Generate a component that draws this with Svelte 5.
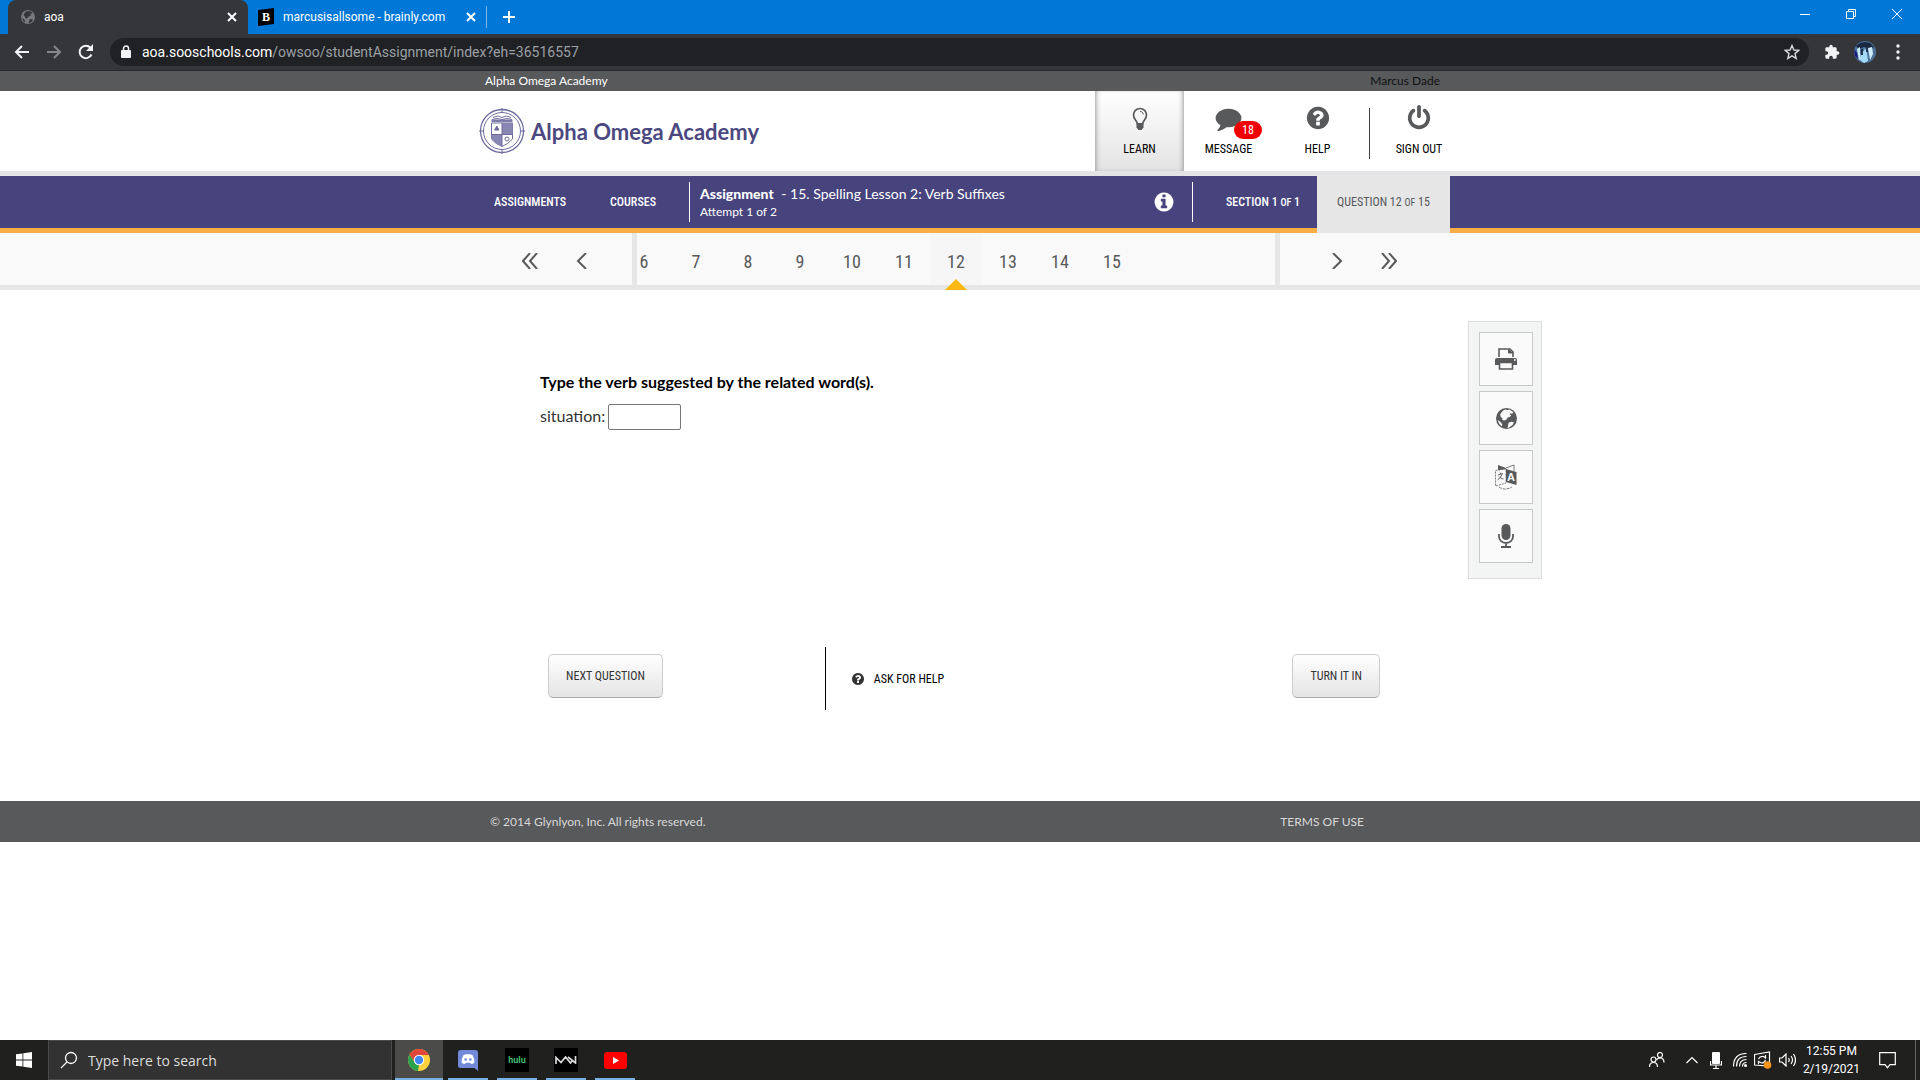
<script>
  const circle = 'M1664 896q0 209-103 385.5t-279.5 279.5-385.5 103-385.5-103-279.5-279.5-103-385.5 103-385.5 279.5-279.5 385.5-103 385.5 103 279.5 279.5 103 385.5z';
  const questionMark = 'M1024 1376v-192q0-14-9-23t-23-9h-192q-14 0-23 9t-9 23v192q0 14 9 23t23 9h192q14 0 23-9t9-23zm256-672q0-88-55.5-163t-138.5-116-170-41q-243 0-371 213-15 24 8 42l132 100q7 6 19 6 16 0 25-12 53-68 86-92 34-24 86-24 48 0 85.5 26t37.5 59q0 38-20 61t-68 45q-63 28-115.5 86.5t-52.5 125.5v36q0 14 9 23t23 9h192q14 0 23-9t9-23q0-19 21.5-49.5t54.5-49.5q32-18 49-28.5t46-35 44.5-48 28-60.5 12.5-81z';
  const infoMark = 'M1152 1376v-160q0-14-9-23t-23-9h-96v-512q0-14-9-23t-23-9h-320q-14 0-23 9t-9 23v160q0 14 9 23t23 9h96v320h-96q-14 0-23 9t-9 23v160q0 14 9 23t23 9h448q14 0 23-9t9-23zm-128-896v-160q0-14-9-23t-23-9h-192q-14 0-23 9t-9 23v160q0 14 9 23t23 9h192q14 0 23-9t9-23z';
  const comment = 'M1792 896q0 174-120 321.5t-326 233-450 85.5q-70 0-145-8-198 175-460 242-49 14-114 22h-5q-15 0-27-10.5t-16-27.5v-1q-3-4-.5-12t2-10 4.5-9.5l6-9 7-8.5 8-9q7-8 31-34.5t34.5-38 31-39.5 32.5-51 27-59 26-76q-157-89-247.5-220t-90.5-281q0-174 120-321.5t326-233 450-85.5 450 85.5 326 233 120 321.5z';
  const power = 'M1664 896q0 156-61 298t-164 245-245 164-298 61-298-61-245-164-164-245-61-298q0-182 80.5-343t226.5-270q43-32 95.5-25t83.5 50q32 42 24.5 94.5t-49.5 84.5q-98 74-151.5 181t-53.5 228q0 104 40.5 198.5t109.5 163.5 163.5 109.5 198.5 40.5 198.5-40.5 163.5-109.5 109.5-163.5 40.5-198.5q0-121-53.5-228t-151.5-181q-42-32-49.5-84.5t24.5-94.5q31-43 84-50t95 25q146 109 226.5 270t80.5 343zm-640-768v640q0 52-38 90t-90 38-90-38-38-90v-640q0-52 38-90t90-38 90 38 38 90z';

  const numbers = [6, 7, 8, 9, 10, 11, 12, 13, 14, 15];
  let current = $state(12);
  let answer = $state('');
</script>

{#snippet globe(size)}
  <svg width={size} height={size} viewBox="0 0 20 20">
    <circle cx="10" cy="10" r="10" fill="currentColor" />
    <path class="land" d="M6.500 2.500 9 1.500l2 .5 2-.5 3.500 2.500-1 1.500-1.500-.5-1 1 1.500 1-1.500 1.500-2 .5-1 2-2 1-2-.5 0-2-1.500-1-.5-2.500z" />
    <path class="land" d="m12 14 2.500-1 2.500.5-1 2.500-3.500 2.500-1.500.5z" />
    <path class="land" d="M1.500 11.500 4 13l2 2.500-.5 2-2.500-2.500z" />
  </svg>
{/snippet}

<div class="screen">
  <div class="tabs">
    <div class="tab active">
      <span class="tab-globe">{@render globe(14)}</span>
      <span class="tab-title">aoa</span>
      <button class="tab-close" aria-label="Close tab">
        <svg width="10" height="10" viewBox="0 0 10 10"><path d="M1 1l8 8M9 1l-8 8" stroke="currentColor" stroke-width="2" /></svg>
      </button>
    </div>
    <div class="tab">
      <svg class="brainly" width="16" height="18" viewBox="0 0 16 18">
        <path d="M0 2 16 0v16L0 18z" fill="#000" />
        <text x="4" y="13" font-size="12" font-weight="900" fill="#fff">B</text>
      </svg>
      <span class="tab-title">marcusisallsome - brainly.com</span>
      <button class="tab-close" aria-label="Close tab">
        <svg width="10" height="10" viewBox="0 0 10 10"><path d="M1 1l8 8M9 1l-8 8" stroke="currentColor" stroke-width="2" /></svg>
      </button>
    </div>
    <button class="new-tab" aria-label="New tab">
      <svg width="12" height="12" viewBox="0 0 12 12"><path d="M6 0v12M0 6h12" stroke="currentColor" stroke-width="2" /></svg>
    </button>
    <div class="window-buttons">
      <button aria-label="Minimize"><svg width="10" height="10" viewBox="0 0 10 10"><path d="M0 5.5h10" /></svg></button>
      <button aria-label="Restore"><svg width="10" height="10" viewBox="0 0 10 10"><path d="M.5 2.5h7v7h-7zM2.500 2.500v-2h7v7h-2" /></svg></button>
      <button aria-label="Close"><svg width="10" height="10" viewBox="0 0 10 10"><path d="m0 0 10 10M10 0 0 10" /></svg></button>
    </div>
  </div>

  <div class="toolbar">
    <button aria-label="Back"><svg width="16" height="16" viewBox="0 0 16 16"><path d="M15 8H2M8 2 2 8l6 6" fill="none" stroke="currentColor" stroke-width="2" /></svg></button>
    <button class="dim" aria-label="Forward"><svg width="16" height="16" viewBox="0 0 16 16"><path d="M1 8h13M8 2l6 6-6 6" fill="none" stroke="currentColor" stroke-width="2" /></svg></button>
    <button aria-label="Reload"><svg width="16" height="16" viewBox="0 0 16 16"><path d="M13.500 10.500A6.200 6.200 0 1 1 12.500 3.800" fill="none" stroke="currentColor" stroke-width="2" /><path d="M15 0v7H8z" fill="currentColor" /></svg></button>
    <div class="omnibox">
      <svg width="10" height="14" viewBox="0 0 10 14"><rect y="5" width="10" height="8" rx="1" fill="currentColor" /><path d="M2.500 6V3.500a2.500 2.500 0 0 1 5 0V6" fill="none" stroke="currentColor" stroke-width="1.500" /></svg>
      <span class="url"><b>aoa.sooschools.com</b>/owsoo/studentAssignment/index?eh=36516557</span>
      <svg class="star" width="16" height="16" viewBox="0 0 16 16"><path d="m8 1.500 1.900 4.500 4.800.4-3.700 3.200 1.200 4.800L8 11.800l-4.200 2.600L5 9.600 1.300 6.400l4.800-.4z" fill="none" stroke="currentColor" stroke-width="1.400" /></svg>
    </div>
    <svg class="puzzle" width="16" height="16" viewBox="0 0 24 24"><path fill="currentColor" d="M20.500 11H19V7c0-1.100-.9-2-2-2h-4V3.500C13 2.120 11.880 1 10.500 1S8 2.120 8 3.500V5H4c-1.100 0-1.990.9-1.990 2v3.800H3.500c1.490 0 2.700 1.210 2.700 2.700s-1.210 2.700-2.700 2.700H2V20c0 1.100.9 2 2 2h3.800v-1.500c0-1.490 1.210-2.700 2.700-2.700s2.700 1.210 2.700 2.700V22H17c1.100 0 2-.9 2-2v-4h1.500c1.380 0 2.500-1.120 2.500-2.500S21.880 11 20.500 11z" /></svg>
    <svg class="avatar" width="22" height="22" viewBox="0 0 22 22">
      <circle cx="11" cy="11" r="11" fill="#4a7098" />
      <path d="M2 5 6 2l5-1 5 1 4 4-4 2-6-2-5 2z" fill="#1b2740" />
      <path d="M3 8l3-2v6l1 6-2 1zM14 7l4-1 1 7-3 6z" fill="#cfeefd" />
      <path d="M8 10h2l1-3 2 5 1 8-4 2-4-3z" fill="#a5dbf8" />
      <path d="M7 8h2v6H7zM12 6h2v5h-2z" fill="#22344f" />
      <path d="M0 8l3 4 1 6-3-3z" fill="#181a80" />
    </svg>
    <svg class="dots" width="4" height="16" viewBox="0 0 4 16"><circle cx="2" cy="2" r="1.700" /><circle cx="2" cy="8" r="1.700" /><circle cx="2" cy="14" r="1.700" /></svg>
  </div>

  <div class="page">
    <div class="school-bar">
      <div class="wrap">
        <span>Alpha Omega Academy</span>
        <span class="student">Marcus Dade</span>
      </div>
    </div>

    <header>
      <div class="wrap">
        <a class="logo" href="#home">
          <svg width="46" height="46" viewBox="0 0 46 46" fill="none" stroke="#6f6d9f">
            <circle cx="23" cy="23" r="21.500" stroke-width="1.300" />
            <circle cx="23" cy="23" r="18.500" />
            <path d="M23 0v5M23 41v5M0 23h5M41 23h5" />
            <path d="M13 11.500q5-2 10 0 5-2 10 0M14 9.500q5-3 9 0 4-3 9 0" />
            <path d="M12.500 15v16q4 5 10.500 7.500 6.500-2.500 10.500-7.500V15z" fill="#fff" />
            <path d="M12.500 11.500h21V14h-21z" fill="#7d7baa" stroke="none" />
            <path d="M23 15h10.500v11.500H23zM12.500 26.500H23v12q-7-3-10.500-7.500z" fill="#8886b3" stroke="none" />
            <path d="M23 15v23M12.500 26.500h21" />
            <path d="m17.800 18 2.200 4h-4.400z" fill="#6f6d9f" />
            <circle cx="28" cy="31" r="2" />
          </svg>
          <span>Alpha Omega Academy</span>
        </a>
        <nav class="main-nav">
          <a class="nav-item current" href="#learn">
            <svg width="24" height="24" viewBox="0 0 24 24">
              <path d="M9.500 17c0-3-4-4.500-4-9a6.500 6.500 0 0 1 13 0c0 4.500-4 6-4 9z" fill="none" stroke="currentColor" stroke-width="1.700" />
              <path d="M12 4.500c2 0 3.200 1 3.200 3" fill="none" stroke="currentColor" />
              <path d="M8.500 16h7v4.500L13.500 23h-3l-2-2.500z" fill="currentColor" />
            </svg>
            LEARN
          </a>
          <a class="nav-item" href="#message">
            <svg width="27" height="24" viewBox="0 130 1792 1664"><path d={comment} fill="currentColor" /></svg>
            MESSAGE
            <span class="badge">18</span>
          </a>
          <a class="nav-item" href="#help">
            <svg width="26" height="26" viewBox="0 0 1792 1792"><path d={circle + questionMark} fill="currentColor" fill-rule="evenodd" /></svg>
            HELP
          </a>
          <a class="nav-item sign-out" href="#signout">
            <svg width="26" height="26" viewBox="0 0 1792 1792"><path d={power} fill="currentColor" /></svg>
            SIGN OUT
          </a>
        </nav>
      </div>
    </header>

    <div class="course-bar">
      <div class="wrap">
        <a class="course-link" href="#assignments">ASSIGNMENTS</a>
        <a class="course-link" href="#courses">COURSES</a>
        <div class="assignment">
          <div>
            <p class="title"><strong>Assignment</strong> - 15. Spelling Lesson 2: Verb Suffixes</p>
            <p class="attempt">Attempt 1 of 2</p>
          </div>
          <button class="info" aria-label="Assignment info">
            <svg width="22" height="22" viewBox="0 0 1792 1792"><path d={circle + infoMark} fill="currentColor" fill-rule="evenodd" /></svg>
          </button>
        </div>
        <div class="section">SECTION 1&nbsp;<small>OF</small>&nbsp;1</div>
        <div class="question-count">QUESTION 12&nbsp;<small>OF</small>&nbsp;15</div>
      </div>
    </div>

    <div class="pager">
      <div class="wrap">
        <div class="jump left">
          <button aria-label="First question"><svg width="16" height="16" viewBox="0 0 16 16"><path d="M8 0 1 8l7 8M15 0 8 8l7 8" /></svg></button>
          <button aria-label="Previous question"><svg width="16" height="16" viewBox="0 0 16 16"><path d="M12 0 4 8l8 8" /></svg></button>
        </div>
        <div class="numbers">
          <div class="track">
            {#each numbers as n}
              <button class:selected={n === current} onclick={() => (current = n)}>{n}</button>
            {/each}
          </div>
        </div>
        <div class="jump right">
          <button aria-label="Next question"><svg width="16" height="16" viewBox="0 0 16 16"><path d="m4 0 8 8-8 8" /></svg></button>
          <button aria-label="Last question"><svg width="16" height="16" viewBox="0 0 16 16"><path d="m1 0 7 8-7 8M8 0l7 8-7 8" /></svg></button>
        </div>
      </div>
    </div>

    <main>
      <div class="content">
        <div class="question">
          <p class="instruction">Type the verb suggested by the related word(s).</p>
          <div class="answer">
            <label for="answer">situation:</label>
            <input id="answer" type="text" bind:value={answer} />
          </div>
        </div>
        <div class="actions">
          <button class="push">NEXT QUESTION</button>
          <a class="ask" href="#ask">
            <svg width="12" height="12" viewBox="128 128 1536 1536"><path d={circle + questionMark} fill="#333" fill-rule="evenodd" /></svg>
            ASK FOR HELP
          </a>
          <button class="push last">TURN IT IN</button>
        </div>
      </div>
      <aside class="tools">
        <button aria-label="Print">
          <svg width="24" height="22" viewBox="0 0 24 22">
            <path d="M5 9V1h11l3 3v5" fill="none" stroke="currentColor" stroke-width="1.600" />
            <path d="M14.500 1v4H19" fill="currentColor" stroke="currentColor" />
            <path d="M1 17v-5q0-2 2-2h18q2 0 2 2v5z" fill="currentColor" />
            <path d="M5.500 14.500h13V21h-13z" fill="#fafafa" stroke="currentColor" stroke-width="1.600" />
            <circle cx="20.800" cy="12" r=".9" fill="#fafafa" />
          </svg>
        </button>
        <button aria-label="Web">{@render globe(21)}</button>
        <button aria-label="Translate">
          <svg width="22" height="26" viewBox="0 0 22 26">
            <path d="M3 1l8 3v2L3 7z" fill="currentColor" />
            <path d="M11 4l8-3v6" fill="none" stroke="currentColor" stroke-width=".8" />
            <path d="M.5 6.500 11 5v14L.5 22z" fill="#fafafa" stroke="currentColor" stroke-width=".8" stroke-dasharray="2 1" />
            <path d="M11 5l10.500 3v13L11 18z" fill="currentColor" />
            <path d="M3 11l5-1.500M5 8.500l1 2M7 10c-1 3-2.500 4.500-4.500 6M4 12.500c1 1.500 2.500 2 4.500 2.500" fill="none" stroke="currentColor" stroke-width=".9" />
            <text x="12" y="17" font-size="11" font-weight="700" fill="#fafafa">A</text>
            <path d="M4 23q6 4 13 0" fill="none" stroke="currentColor" stroke-width=".8" stroke-dasharray="3 1" />
          </svg>
        </button>
        <button aria-label="Record">
          <svg width="16" height="24" viewBox="0 0 16 24">
            <rect x="3.500" y="0" width="9" height="16" rx="4.500" fill="currentColor" />
            <path d="M1 10v2.500a7 6.500 0 0 0 14 0V10M8 19v4M3 23h10" fill="none" stroke="currentColor" stroke-width="1.800" />
          </svg>
        </button>
      </aside>
    </main>

    <footer>
      <div class="wrap">
        <span>© 2014 Glynlyon, Inc. All rights reserved.</span>
        <a href="#terms">TERMS OF USE</a>
      </div>
    </footer>
  </div>

  <div class="taskbar">
    <button class="start" aria-label="Start">
      <svg width="16" height="16" viewBox="0 0 16 16" fill="#fff"><path d="M0 2.300 6.500 1.400v6.200H0zM7.300 1.200 16 0v7.600H7.300zM0 8.400h6.500v6.200L0 13.700zM7.300 8.400H16V16l-8.700-1.200z" /></svg>
    </button>
    <label class="search">
      <svg width="18" height="18" viewBox="0 0 18 18" fill="none" stroke="#fff" stroke-width="1.300"><circle cx="11" cy="7" r="5.500" /><path d="M7 11 1 17" /></svg>
      <input type="text" placeholder="Type here to search" />
    </label>
    <div class="apps">
      <button class="app chrome" aria-label="Chrome">
        <svg width="22" height="22" viewBox="0 0 22 22">
          <circle cx="11" cy="11" r="11" fill="#fdd23e" />
          <path d="M1.500 5.500A11 11 0 0 1 20.500 5.500L20.800 6H11L6.700 13.500z" fill="#e2453b" />
          <path d="M1.500 5.500 6.700 13.500 11 16l-1 6A11 11 0 0 1 1.500 5.500z" fill="#2ba24c" />
          <circle cx="11" cy="11" r="5.200" fill="#fff" /><circle cx="11" cy="11" r="4.200" fill="#4286f4" />
        </svg>
      </button>
      <button class="app" aria-label="Discord">
        <svg width="20" height="21" viewBox="0 0 20 21">
          <path d="M2.500 0h15Q20 0 20 2.500V21l-3.500-3h-14Q0 18 0 15.500v-13Q0 0 2.500 0z" fill="#7289da" />
          <path d="M5.500 5 8 4.300h4l2.500.7q2 3.500 2 7.500-1.500 1.500-3.500 1.500l-.8-1.200H7.800L7 14q-2 0-3.500-1.500 0-4 2-7.500z" fill="#fff" />
          <circle cx="7.700" cy="9.500" r="1.300" fill="#7289da" /><circle cx="12.300" cy="9.500" r="1.300" fill="#7289da" />
        </svg>
      </button>
      <button class="app" aria-label="Hulu"><span class="tile hulu">hulu</span></button>
      <button class="app" aria-label="Modern Warfare">
        <span class="tile">
          <svg width="22" height="8" viewBox="0 0 22 8" fill="none" stroke="#d8d8d8" stroke-width="1.700"><path d="M1 8V1.500l5 5 4.500-5.500 5 6 2-2.500M13 1l7.500 6V0" /></svg>
        </span>
      </button>
      <button class="app" aria-label="YouTube">
        <svg width="23" height="17" viewBox="0 0 23 17"><rect width="23" height="17" rx="3" fill="#f00" /><path d="M9 5v7l6-3.500z" fill="#fff" /></svg>
      </button>
    </div>
    <div class="tray">
      <svg width="16" height="16" viewBox="0 0 16 16"><circle cx="4.500" cy="7.500" r="2.500" /><path d="M.5 15q0-4.500 4-4.500t4 4.500" /><circle cx="11" cy="3" r="2.500" /><path d="M7.500 8q1-2 3.500-2 4 0 4 4.500" /></svg>
      <svg class="chevron" width="12" height="8" viewBox="0 0 12 8"><path d="m.5 7 5.500-5.500L11.500 7" /></svg>
      <svg class="mic" width="12" height="17" viewBox="0 0 12 17"><rect x="2" y="0" width="8" height="12" rx="1" fill="#fff" stroke="none" /><path d="M.5 9v4h11V9M6 13v3M3 16.500h6" /></svg>
      <svg width="14" height="14" viewBox="0 0 14 14"><path d="M.5 13.500q0-13 13-13M3.500 13.500q0-10 10-10M6.500 13.500q0-7 7-7M9.500 13.500q0-4 4-4" /><circle cx="12.500" cy="12.500" r="1.500" fill="#fff" stroke="none" /></svg>
      <svg width="18" height="18" viewBox="0 0 18 18"><path d="M.5 3.500 15.500 1v14L.5 14z" /><path d="M4.500 8q1.500-3 5-2.500l2 1.500V4M11.500 9q-1 3-4 3l-3-1.500V13" /><circle cx="13.500" cy="14" r="3.800" fill="#f7941d" stroke="none" /></svg>
      <svg width="17" height="14" viewBox="0 0 17 14"><path d="M.5 5v4h2.500l4 4V1L3 5zM9.500 5q1.500 2 0 4M12 3q3 4 0 8M14.500 1q4 6 0 12" /></svg>
      <div class="clock"><span>12:55 PM</span><span>2/19/2021</span></div>
      <svg class="notes" width="17" height="17" viewBox="0 0 17 17"><path d="M.7.7h15.600v12H11l-2.500 3-2.500-3H.7z" /></svg>
    </div>
  </div>
</div>

<style>
  :global(body) {
    margin: 0;
    background: #fff;
  }

  .screen {
    min-height: 100vh;
    display: flex;
    flex-direction: column;
    font-family: Roboto, "Open Sans", sans-serif;
  }

  button {
    display: flex;
    align-items: center;
    justify-content: center;
    padding: 0;
    border: 0;
    background: none;
    color: inherit;
    font: inherit;
    cursor: pointer;
  }

  a {
    color: inherit;
    text-decoration: none;
  }

  p {
    margin: 0;
  }

  /* browser */
  .tabs {
    display: flex;
    align-items: center;
    height: 34px;
    padding-left: 8px;
    background: #0078d7;
    color: #fff;
    font-size: 12px;
  }

  .tab {
    display: flex;
    align-items: center;
    box-sizing: border-box;
    width: 238px;
    height: 34px;
    padding: 0 10px;
  }

  .tab.active {
    width: 240px;
    padding: 0 11px 0 13px;
    border-radius: 8px 8px 0 0;
    background: #35363a;
  }

  .tab-globe {
    display: flex;
    color: #77797c;
    --land: #35363a;
  }

  .land {
    fill: var(--land, #fafafa);
  }

  .tab-title {
    flex: 1;
    margin-left: 9px;
    white-space: nowrap;
  }

  .brainly {
    font-family: "Liberation Serif", serif;
  }

  .new-tab {
    height: 22px;
    padding-left: 16px;
    border-left: 1px solid #7db9ea;
  }

  .window-buttons {
    display: flex;
    align-self: stretch;
    margin-left: auto;
  }

  .window-buttons button {
    width: 46px;
    height: 28px;
  }

  .window-buttons path {
    fill: none;
    stroke: #fff;
  }

  .toolbar {
    display: flex;
    align-items: center;
    height: 36px;
    padding: 0 20px 0 14px;
    border-bottom: 1px solid #28292b;
    background: #35363a;
    color: #f1f3f4;
  }

  .toolbar button {
    margin-right: 16px;
  }

  .toolbar .dim {
    color: #85878a;
  }

  .omnibox {
    flex: 1;
    display: flex;
    align-items: center;
    height: 28px;
    padding: 0 9px 0 11px;
    border-radius: 14px;
    background: #202124;
  }

  .url {
    flex: 1;
    margin-left: 11px;
    color: #9aa0a6;
    font-size: 14px;
  }

  .url b {
    color: #fff;
    font-weight: 400;
  }

  .star {
    color: #d5d7da;
  }

  .puzzle {
    margin: 0 14px 0 15px;
  }

  .dots {
    margin-left: 20px;
    fill: #f1f3f4;
  }

  /* page */
  .page {
    flex: 1;
    color: #000;
    font-family: Lato, sans-serif;
  }

  .wrap {
    display: flex;
    width: 980px;
    max-width: 100%;
    margin: 0 auto;
  }

  .school-bar {
    background: #58595b;
    color: #fff;
    font-size: 12px;
    line-height: 20px;
  }

  .school-bar .wrap {
    box-sizing: border-box;
    justify-content: space-between;
    padding: 0 10px 0 15px;
  }

  .student {
    color: #111;
  }

  header {
    border-bottom: 5px solid #e4e4e7;
  }

  header .wrap {
    height: 80px;
    justify-content: space-between;
  }

  .logo {
    display: flex;
    align-items: center;
    gap: 6px;
    padding-left: 9px;
    color: #4b4880;
    font-size: 22px;
    font-weight: 700;
  }

  .main-nav,
  .course-link,
  .section,
  .question-count,
  .actions,
  .numbers {
    font-family: "Roboto Condensed", "Liberation Sans Narrow", sans-serif;
  }

  .main-nav {
    display: flex;
    font-size: 12px;
    line-height: 20px;
  }

  .nav-item {
    position: relative;
    display: flex;
    flex-direction: column;
    align-items: center;
    justify-content: flex-end;
    gap: 8px;
    width: 89px;
    padding-bottom: 12px;
    box-sizing: border-box;
  }

  .nav-item svg {
    color: #58595b;
  }

  .nav-item.current {
    background: linear-gradient(#fff, #e3e3e3);
    box-shadow: inset 4px 0 5px -3px #999, inset -4px 0 5px -3px #999;
  }

  .nav-item.sign-out {
    width: 88px;
    padding-left: 26px;
  }

  .sign-out::before {
    content: "";
    position: absolute;
    left: 7px;
    top: 17px;
    height: 51px;
    border-left: 1px solid #444;
  }

  .badge {
    position: absolute;
    left: 50px;
    top: 30px;
    width: 28px;
    border-radius: 9px;
    background: #f00000;
    color: #fff;
    line-height: 18px;
    text-align: center;
  }

  .course-bar {
    border-bottom: 5px solid #f8ae47;
    background: #46437d;
    color: #fff;
  }

  .course-bar .wrap {
    height: 52px;
    align-items: center;
    font-size: 12px;
  }

  .course-link,
  .section {
    font-weight: 500;
  }

  .course-link {
    width: 79px;
  }

  .course-link:first-child {
    width: 116px;
    padding-left: 24px;
  }

  .assignment {
    flex: 1;
    display: flex;
    align-items: center;
    justify-content: space-between;
    height: 40px;
    padding: 0 17px 0 10px;
    border: solid #fff;
    border-width: 0 1px;
  }

  .title {
    font-size: 14px;
    line-height: 20px;
  }

  .title strong {
    margin-right: 4px;
    font-weight: 900;
  }

  .attempt {
    font-size: 12px;
    line-height: 16px;
  }

  .section {
    width: 108px;
    padding-left: 16px;
    text-align: center;
    line-height: 52px;
  }

  .question-count {
    align-self: flex-start;
    width: 133px;
    height: 57px;
    background: #e6e6e6;
    color: #58595b;
    line-height: 52px;
    text-align: center;
  }

  small {
    font-size: 10px;
  }

  .pager {
    border-bottom: 5px solid #e6e6e6;
    background: #f9f9f9;
    color: #58595b;
  }

  .pager .wrap,
  .track {
    height: 52px;
  }

  .jump {
    display: flex;
  }

  .left {
    width: 128px;
    padding-left: 34px;
  }

  .right {
    width: 139px;
    padding-left: 31px;
  }

  .pager button {
    box-sizing: border-box;
    flex: none;
    width: 52px;
    height: 52px;
    padding-top: 4px;
  }

  .jump path {
    fill: none;
    stroke: currentColor;
    stroke-width: 2;
  }

  .numbers {
    flex: 1;
    border: solid #e6e6e6;
    border-width: 0 5px;
    font-size: 18px;
    overflow-x: clip;
  }

  .track {
    display: flex;
    margin-left: -19px;
  }

  .track .selected {
    position: relative;
    background: #f6f6f6;
  }

  .selected::after {
    content: "";
    position: absolute;
    left: 15px;
    top: 46px;
    border: solid transparent;
    border-width: 0 11px 11px;
    border-bottom-color: #fdb913;
  }

  main {
    display: grid;
    grid-template-columns: 1fr 980px 1fr;
    align-items: start;
  }

  .content {
    grid-column: 2;
    padding-bottom: 91px;
  }

  .question {
    box-sizing: border-box;
    min-height: 357px;
    padding: 80px 70px 0;
    font-size: 16px;
    line-height: 24px;
  }

  .instruction {
    font-weight: 700;
  }

  .answer {
    display: flex;
    gap: 3px;
    margin-top: 10px;
    color: #333;
  }

  .answer input {
    box-sizing: border-box;
    width: 73px;
    height: 26px;
    border: 1px solid #767676;
    border-radius: 2px;
  }

  .actions {
    display: flex;
    align-items: center;
    height: 63px;
    padding: 0 70px 0 78px;
    font-size: 12px;
  }

  .push {
    height: 44px;
    margin-bottom: 5px;
    padding: 0 17px;
    border: 1px solid #ccc;
    border-bottom-color: #aaa;
    border-radius: 5px;
    background: linear-gradient(#fff, #e4e4e4);
    color: #333;
  }

  .ask {
    display: flex;
    align-items: center;
    gap: 10px;
    height: 63px;
    margin-left: 162px;
    padding-left: 26px;
    border-left: 1px solid #000;
  }

  .last {
    margin-left: auto;
  }

  .tools {
    display: flex;
    flex-direction: column;
    gap: 5px;
    justify-self: start;
    margin: 31px 0 0 18px;
    padding: 10px 8px 15px 10px;
    border: 1px solid #ddd;
    background: #f3f4f4;
    color: #58595b;
    font-family: "Liberation Sans", sans-serif;
  }

  .tools button {
    width: 54px;
    height: 54px;
    border: 1px solid #c8c8c8;
    background: #fafafa;
  }

  footer {
    background: #58595b;
    color: #d8d8d8;
    font-size: 12px;
    line-height: 41px;
  }

  footer .wrap {
    box-sizing: border-box;
    justify-content: space-between;
    padding: 0 86px 0 20px;
  }

  /* taskbar */
  .taskbar {
    display: flex;
    height: 40px;
    background: #20201f;
    color: #fff;
  }

  .start {
    width: 48px;
  }

  .search {
    display: flex;
    align-items: center;
    gap: 8px;
    box-sizing: border-box;
    width: 344px;
    padding-left: 11px;
    border: 1px solid #4a4a4a;
    background: #323232;
  }

  .search input {
    flex: 1;
    min-width: 0;
    border: 0;
    outline: 0;
    background: none;
    color: #fff;
    font-family: "Open Sans", sans-serif;
    font-size: 14px;
  }

  .search input::placeholder {
    color: #ddd;
  }

  .apps {
    display: flex;
    gap: 9px;
    margin-left: 3px;
  }

  .app {
    box-sizing: border-box;
    width: 40px;
    padding-top: 2px;
    border-bottom: 2px solid #76b0e4;
  }

  .app.chrome {
    width: 48px;
    margin-right: -4px;
    background: #4b4b4a;
  }

  .tile {
    display: flex;
    align-items: center;
    justify-content: center;
    width: 24px;
    height: 24px;
    background: #000;
  }

  .hulu {
    color: #3dbb6c;
    font-size: 9px;
    font-weight: 700;
  }

  .tray {
    display: flex;
    align-items: center;
    gap: 7px;
    margin-left: auto;
    margin-right: 4px;
    padding-right: 19px;
    border-right: 1px solid #666;
  }

  .tray svg {
    fill: none;
    stroke: #fff;
    stroke-width: 1.2;
  }

  .tray .chevron {
    margin-left: 14px;
    margin-right: 5px;
  }

  .tray .mic {
    margin-right: 4px;
  }

  .clock {
    display: flex;
    flex-direction: column;
    align-items: center;
    font-size: 12px;
    line-height: 18px;
  }

  .tray .notes {
    margin-left: 12px;
  }
</style>
